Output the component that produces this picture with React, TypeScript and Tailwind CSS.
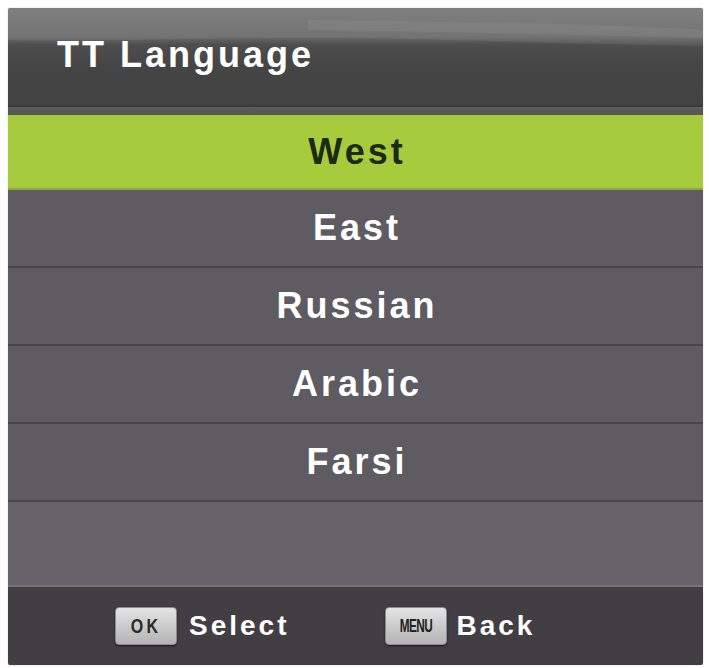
const items = ["West", "East", "Russian", "Arabic", "Farsi"];

function KeyCap({ label, narrow }: { label: string; narrow?: boolean }) {
  return (
    <div className="flex h-[38px] w-[62px] items-center justify-center rounded-[4px] border border-[#8e8e8e] bg-[linear-gradient(to_bottom,#e4e4e4,#c9c9c9_55%,#b4b4b4)] shadow-[0_1px_2px_rgba(0,0,0,0.6)]">
      {narrow ? (
        <span className="inline-block origin-center scale-x-[0.62] text-[19px] font-bold tracking-[-1px] text-[#222]">
          {label}
        </span>
      ) : (
        <span className="inline-block origin-center scale-x-[0.8] text-[20px] font-bold tracking-[4px] text-[#2a2a2a]">
          {label}
        </span>
      )}
    </div>
  );
}

export default function App() {
  return (
    <div className="min-h-screen bg-white p-[8px] font-['Liberation_Sans',Arial,sans-serif]">
      <div className="flex h-[657px] w-[695px] flex-col overflow-hidden rounded-[2px] shadow-[0_0_1px_rgba(0,0,0,0.5)]">
        {/* title bar */}
        <div className="relative flex h-[97px] items-center bg-[linear-gradient(to_bottom,#777_0%,#686868_30%,#4d4d4d_38%,#454545_60%,#424242_100%)] pl-[49px]">
          <svg className="absolute inset-0 h-full w-full" viewBox="0 0 695 97" preserveAspectRatio="none">
            <path d="M0 0 H695 V38 C560 36 420 30 300 30 C180 30 80 34 0 32 Z" fill="rgba(255,255,255,0.07)" />
            <path d="M300 12 C450 14 600 16 695 22 V30 C600 28 450 24 300 22 Z" fill="rgba(255,255,255,0.06)" />
          </svg>
          <span className="relative -mt-[4px] text-[36px] font-bold tracking-[3px] text-white">TT Language</span>
        </div>
        <div className="h-[10px] border-t-2 border-[#3a3a3a] bg-[linear-gradient(to_bottom,#5e5e5e,#545454)]" />

        {/* list */}
        {items.map((name, i) =>
          i === 0 ? (
            <div
              key={name}
              className="flex h-[75px] items-center justify-center border-b-2 border-[#8ea93c] bg-[#a6cc3e]"
            >
              <span className="pl-[3px] text-[36px] font-bold tracking-[3px] text-[#1d2a14]">{name}</span>
            </div>
          ) : (
            <div
              key={name}
              className="flex h-[78px] items-center justify-center border-b-2 border-[#48464b] bg-[#5e5b62]"
            >
              <span className="pl-[3px] text-[36px] font-bold tracking-[3px] text-white">{name}</span>
            </div>
          )
        )}
        <div className="h-[85px] border-b-2 border-[#757279] bg-[#66636a]" />

        {/* footer */}
        <div className="flex flex-1 items-center bg-[#423e44] pl-[107px]">
          <KeyCap label="OK" />
          <span className="ml-[12px] text-[28px] font-bold tracking-[3px] text-white">Select</span>
          <div className="ml-[95px]">
            <KeyCap label="MENU" narrow />
          </div>
          <span className="ml-[10px] text-[28px] font-bold tracking-[3px] text-white">Back</span>
        </div>
      </div>
    </div>
  );
}
